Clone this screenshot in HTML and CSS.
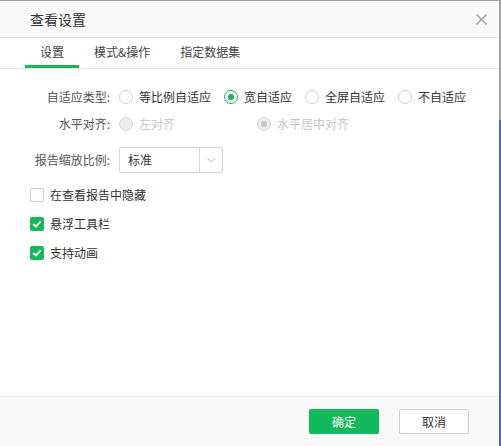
FILE: index.html
```html
<!DOCTYPE html>
<html lang="zh">
<head>
<meta charset="utf-8">
<link rel="stylesheet" href="styles.css">
</head>
<body>
<div class="dialog">
  <div class="titlebar">
    <span class="title">查看设置</span>
    <svg class="close" width="11" height="11" viewBox="0 0 11 11"><path d="M0.5 0.5 L10.5 10.5 M10.5 0.5 L0.5 10.5" stroke="#9a9a9a" stroke-width="1.2" fill="none"/></svg>
  </div>
  <div class="tabs">
    <div class="tab active">设置</div>
    <div class="tab">模式&amp;操作</div>
    <div class="tab">指定数据集</div>
  </div>
  <div class="content">
    <div class="row">
      <div class="label">自适应类型:</div>
      <div class="options">
        <div class="opt"><span class="radio"></span><span>等比例自适应</span></div>
        <div class="opt"><span class="radio checked"></span><span>宽自适应</span></div>
        <div class="opt"><span class="radio"></span><span>全屏自适应</span></div>
        <div class="opt"><span class="radio"></span><span>不自适应</span></div>
      </div>
    </div>
    <div class="row">
      <div class="label">水平对齐:</div>
      <div class="options disabled">
        <div class="opt wide"><span class="radio off"></span><span>左对齐</span></div>
        <div class="opt"><span class="radio off checked-off"></span><span>水平居中对齐</span></div>
      </div>
    </div>
    <div class="row select-row">
      <div class="label">报告缩放比例:</div>
      <div class="select">
        <span class="select-value">标准</span>
        <span class="select-arrow"><svg width="9" height="6" viewBox="0 0 9 6"><path d="M0.5 1 L4.5 5 L8.5 1" stroke="#b5b5b5" stroke-width="1" fill="none"/></svg></span>
      </div>
    </div>
    <div class="check-list">
      <div class="check-row"><span class="checkbox"></span><span>在查看报告中隐藏</span></div>
      <div class="check-row"><span class="checkbox on"><svg width="10" height="8" viewBox="0 0 10 8"><path d="M1.2 4 L3.8 6.4 L8.8 1.4" stroke="#fff" stroke-width="1.8" fill="none"/></svg></span><span>悬浮工具栏</span></div>
      <div class="check-row"><span class="checkbox on"><svg width="10" height="8" viewBox="0 0 10 8"><path d="M1.2 4 L3.8 6.4 L8.8 1.4" stroke="#fff" stroke-width="1.8" fill="none"/></svg></span><span>支持动画</span></div>
    </div>
  </div>
  <div class="footer">
    <button class="btn primary">确定</button>
    <button class="btn">取消</button>
  </div>
</div>
</body>
</html>
```

FILE: styles.css
```css
html, body {
  margin: 0;
  padding: 0;
}
body {
  width: 501px;
  height: 446px;
  overflow: hidden;
  background: linear-gradient(#a3a3a3 0, #a3a3a3 120px, #4b6ea8 120px);
  font-family: "Noto Sans CJK SC", "Liberation Sans", sans-serif;
  font-size: 12px;
  color: #333;
}
.dialog {
  margin-top: 1px;
  width: 499px;
  height: 445px;
  background: #fff;
  display: flex;
  flex-direction: column;
}
.titlebar {
  height: 36px;
  background: #fafafa;
  border-bottom: 1px solid #e6e6e6;
  display: flex;
  align-items: center;
  justify-content: space-between;
  padding: 0 12px 0 30px;
}
.title {
  font-size: 14px;
  color: #333;
  line-height: 20px;
}
.close {
  display: block;
}
.tabs {
  height: 30px;
  border-bottom: 1px solid #e6e6e6;
  display: flex;
  padding-left: 25px;
}
.tab {
  box-sizing: border-box;
  height: 30px;
  padding: 6px 15px 0;
  line-height: 16px;
  color: #444;
}
.tab.active {
  border-bottom: 3px solid #16b85a;
}
.content {
  flex: 1;
  padding: 14px 0 0 30px;
}
.row {
  display: flex;
  align-items: center;
  height: 27px;
}
.label {
  width: 80px;
  text-align: right;
  margin-right: 9px;
  color: #555;
  line-height: 16px;
}
.options {
  display: flex;
  align-items: center;
  gap: 13px;
}
.opt {
  display: flex;
  align-items: center;
  gap: 6px;
  line-height: 16px;
}
.opt.wide {
  width: 125px;
}
.disabled .opt {
  color: #c8c8c8;
}
.radio {
  box-sizing: border-box;
  width: 14px;
  height: 14px;
  border: 1px solid #cfcfcf;
  border-radius: 50%;
  background: #fff;
  display: flex;
  align-items: center;
  justify-content: center;
}
.radio.checked {
  border-color: #16b85a;
}
.radio.checked::after {
  content: "";
  width: 6px;
  height: 6px;
  border-radius: 50%;
  background: #16b85a;
}
.radio.off {
  background: #ececec;
  border-color: #d8d8d8;
}
.radio.checked-off::after {
  content: "";
  width: 6px;
  height: 6px;
  border-radius: 50%;
  background: #c4c4c4;
}
.select-row {
  height: 26px;
  margin-top: 10px;
}
.select {
  box-sizing: border-box;
  width: 104px;
  height: 26px;
  border: 1px solid #d4d4d4;
  border-radius: 2px;
  display: flex;
  align-items: stretch;
}
.select-value {
  flex: 1;
  padding-left: 8px;
  line-height: 24px;
  color: #333;
}
.select-arrow {
  width: 22px;
  border-left: 1px solid #d4d4d4;
  display: flex;
  align-items: center;
  justify-content: center;
}
.check-list {
  margin-top: 7px;
}
.check-row {
  height: 29px;
  display: flex;
  align-items: center;
  gap: 6px;
  line-height: 16px;
}
.checkbox {
  box-sizing: border-box;
  width: 14px;
  height: 14px;
  border: 1px solid #cfcfcf;
  border-radius: 2px;
  background: #fff;
  display: flex;
  align-items: center;
  justify-content: center;
}
.checkbox.on {
  background: #16b85a;
  border-color: #16b85a;
}
.checkbox svg {
  display: block;
}
.footer {
  height: 49px;
  background: #fafafa;
  border-top: 1px solid #e6e6e6;
  display: flex;
  justify-content: flex-end;
  align-items: flex-start;
  gap: 20px;
  padding: 12px 30px 0 0;
  box-sizing: border-box;
  height: 50px;
}
.btn {
  box-sizing: border-box;
  width: 70px;
  height: 25px;
  border: 1px solid #cfcfcf;
  border-radius: 2px;
  background: #fff;
  color: #333;
  font-family: "Noto Sans CJK SC", "Liberation Sans", sans-serif;
  font-size: 12px;
  padding: 0;
  line-height: 23px;
}
.btn.primary {
  background: #13b95b;
  border-color: #13b95b;
  color: #fff;
}
```
